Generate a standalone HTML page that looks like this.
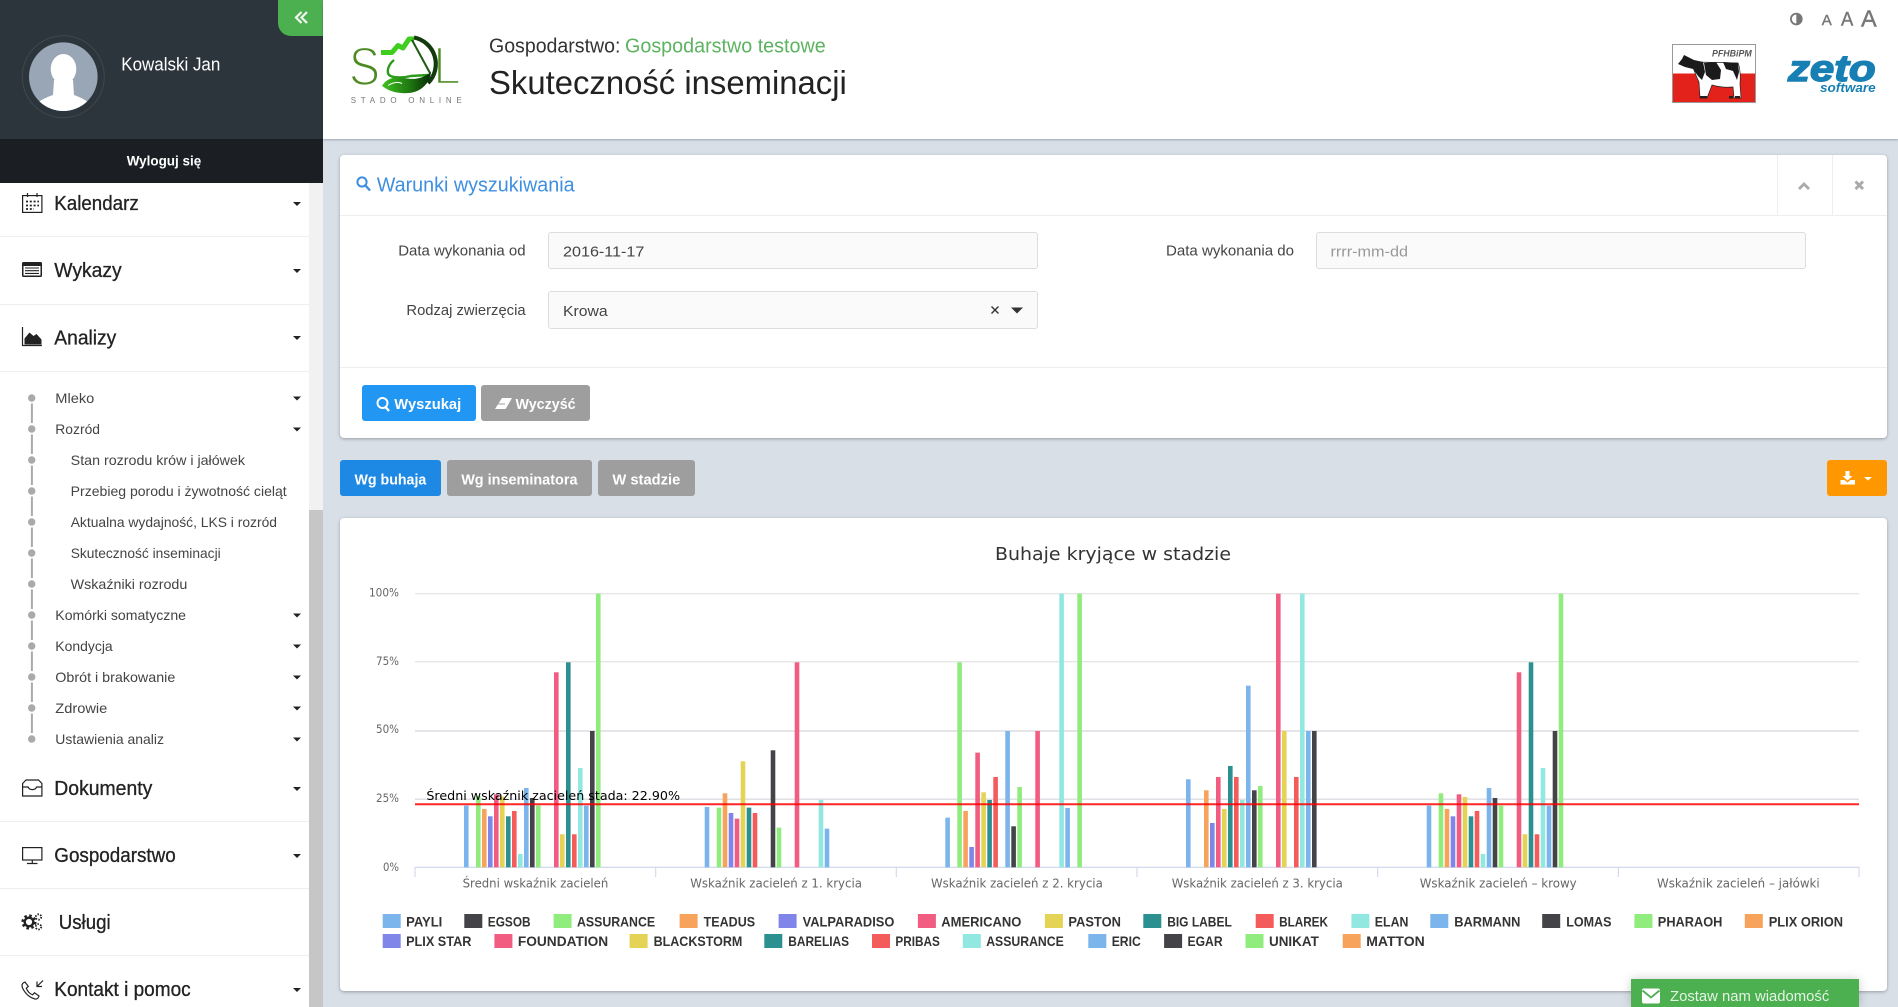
<!DOCTYPE html>
<html lang="pl"><head><meta charset="utf-8"><title>Skuteczność inseminacji</title>
<style>
html,body{margin:0;padding:0;background:#d8dfe7;width:1898px;height:1007px;overflow:hidden}
div{position:absolute;box-sizing:border-box}
svg.o{position:absolute;left:0;top:0;width:1898px;height:1007px}
text{font-family:"Liberation Sans",sans-serif;white-space:pre}
.m{font-size:20px;fill:#222;stroke:#222;stroke-width:.3}
.s{font-size:14px;fill:#444}
.l{font-size:15px;fill:#444}
.i{font-size:15px;fill:#444}
.b{font-size:15px;fill:#fff;font-weight:700}
.d{font-family:"DejaVu Sans",sans-serif;font-size:12px;fill:#666}
.lg{font-family:"Liberation Sans Narrow","Liberation Sans",sans-serif;font-weight:700;font-size:14px;fill:#333}
.c0{fill:#7cb5ec}.c1{fill:#434348}.c2{fill:#90ed7d}.c3{fill:#f7a35c}.c4{fill:#8085e9}.c5{fill:#f15c80}.c6{fill:#e4d354}.c7{fill:#2b908f}.c8{fill:#f45b5b}.c9{fill:#91e8e1}
.br rect{width:4.6px}
.sw rect{width:18px;height:14px}
.car{fill:#222}
</style></head><body>
<!-- sidebar -->
<div style="left:0;top:0;width:323px;height:1007px;background:#fff"></div>
<div style="left:0;top:0;width:323px;height:139px;background:#2d353c"></div>
<div style="left:0;top:139px;width:323px;height:44px;background:#1b1f23"></div>
<div style="left:278px;top:0;width:45px;height:36px;background:#4caf50;border-bottom-left-radius:13px"></div>
<div style="left:309px;top:183px;width:14px;height:327px;background:#f1f1f1"></div>
<div style="left:309px;top:510px;width:14px;height:497px;background:#c6c6c6"></div>
<div style="left:0;top:236px;width:309px;height:1px;background:#eee"></div>
<div style="left:0;top:304px;width:309px;height:1px;background:#eee"></div>
<div style="left:0;top:371px;width:309px;height:1px;background:#eee"></div>
<div style="left:0;top:821px;width:309px;height:1px;background:#eee"></div>
<div style="left:0;top:888px;width:309px;height:1px;background:#eee"></div>
<div style="left:0;top:955px;width:309px;height:1px;background:#eee"></div>
<!-- header -->
<div style="left:323px;top:0;width:1575px;height:139px;background:#fff;box-shadow:0 1px 2px rgba(0,0,0,.25)"></div>
<!-- search panel -->
<div style="left:340px;top:155px;width:1547px;height:283px;background:#fff;border-radius:4px;box-shadow:0 1px 3px rgba(0,0,0,.3)"></div>
<div style="left:340px;top:215px;width:1547px;height:1px;background:#eee"></div>
<div style="left:340px;top:367px;width:1547px;height:1px;background:#eee"></div>
<div style="left:1777px;top:155px;width:1px;height:60px;background:#eee"></div>
<div style="left:1832px;top:155px;width:1px;height:60px;background:#eee"></div>
<div style="left:548px;top:232px;width:490px;height:37px;background:#fafafa;border:1px solid #ddd;border-radius:3px"></div>
<div style="left:1316px;top:232px;width:490px;height:37px;background:#fafafa;border:1px solid #ddd;border-radius:3px"></div>
<div style="left:548px;top:291px;width:490px;height:38px;background:#fafafa;border:1px solid #ddd;border-radius:3px"></div>
<div style="left:362px;top:385px;width:114px;height:36px;background:#2196f3;border-radius:3px"></div>
<div style="left:481px;top:385px;width:109px;height:36px;background:#9e9e9e;border-radius:3px"></div>
<div style="left:340px;top:460px;width:101px;height:36px;background:#1e88e5;border-radius:3px"></div>
<div style="left:447px;top:460px;width:145px;height:36px;background:#9e9e9e;border-radius:3px"></div>
<div style="left:598px;top:460px;width:97px;height:36px;background:#9e9e9e;border-radius:3px"></div>
<div style="left:1827px;top:460px;width:60px;height:36px;background:#ff9800;border-radius:3px"></div>
<!-- chart panel -->
<div style="left:340px;top:518px;width:1547px;height:473px;background:#fff;border-radius:4px;box-shadow:0 1px 3px rgba(0,0,0,.3)"></div>
<div style="left:1631px;top:979px;width:228px;height:28px;background:#4caf50;box-shadow:0 0 10px rgba(0,0,0,.2)"></div>

<svg class="o" viewBox="0 0 1898 1007" xmlns="http://www.w3.org/2000/svg">
<defs>
<clipPath id="av"><circle cx="63.3" cy="76.7" r="34.3"/></clipPath>
<linearGradient id="lf" x1="0" x2="1" y1="0" y2="0"><stop offset="0" stop-color="#3fc21f"/><stop offset=".55" stop-color="#1f7a12"/><stop offset="1" stop-color="#082c05"/></linearGradient>
</defs>
<!-- sidebar head -->
<circle cx="63.3" cy="76.7" r="41" fill="none" stroke="#3f474f" stroke-width="1"/>
<circle cx="63.3" cy="76.7" r="34.3" fill="#98a6b5"/>
<g clip-path="url(#av)" fill="#fff">
<ellipse cx="63.500" cy="69" rx="12.800" ry="15"/>
<path d="M28 116 Q32 102 53 95 L54 80 L73 80 L74 95 Q94 102 98 116 Z"/>
</g>
<text x="121.3" y="70.7" font-size="18" fill="#fff" textLength="99" lengthAdjust="spacingAndGlyphs">Kowalski Jan</text>
<text x="126.7" y="165.7" font-size="14" font-weight="700" fill="#fff" textLength="74.5" lengthAdjust="spacingAndGlyphs">Wyloguj się</text>
<path d="M301.500 12 L296 17.500 L301.500 23 M307 12 L301.500 17.500 L307 23" fill="none" stroke="#fff" stroke-width="2.200" opacity=".92"/>

<!-- main menu -->
<text class="m" x="54.3" y="210" textLength="84.4" lengthAdjust="spacingAndGlyphs">Kalendarz</text>
<text class="m" x="54.3" y="277" textLength="67.4" lengthAdjust="spacingAndGlyphs">Wykazy</text>
<text class="m" x="54.3" y="344.5" textLength="62" lengthAdjust="spacingAndGlyphs">Analizy</text>
<text class="m" x="54.3" y="795" textLength="98" lengthAdjust="spacingAndGlyphs">Dokumenty</text>
<text class="m" x="54.3" y="862" textLength="121.4" lengthAdjust="spacingAndGlyphs">Gospodarstwo</text>
<text class="m" x="58.7" y="929" textLength="52" lengthAdjust="spacingAndGlyphs">Usługi</text>
<text class="m" x="54.3" y="996" textLength="136.4" lengthAdjust="spacingAndGlyphs">Kontakt i pomoc</text>
<!-- carets -->
<g class="car">
<path d="M293 202h8l-4 4z"/><path d="M293 269h8l-4 4z"/><path d="M293 336h8l-4 4z"/>
<path d="M293 396.500h8l-4 4z"/><path d="M293 427.500h8l-4 4z"/><path d="M293 613.500h8l-4 4z"/><path d="M293 644.500h8l-4 4z"/><path d="M293 675.500h8l-4 4z"/><path d="M293 706.500h8l-4 4z"/><path d="M293 737.500h8l-4 4z"/>
<path d="M293 787h8l-4 4z"/><path d="M293 854h8l-4 4z"/><path d="M293 988h8l-4 4z"/>
</g>
<!-- timeline -->
<path d="M31.900 403.500V735" stroke="#aaa" stroke-width="2" stroke-dasharray="19.500 11.500" fill="none"/>
<g fill="#aaa">
<circle cx="31.700" cy="398" r="3.700"/><circle cx="31.700" cy="429" r="3.700"/><circle cx="31.700" cy="460" r="3.700"/><circle cx="31.700" cy="491" r="3.700"/><circle cx="31.700" cy="522" r="3.700"/><circle cx="31.700" cy="553" r="3.700"/><circle cx="31.700" cy="584" r="3.700"/><circle cx="31.700" cy="615" r="3.700"/><circle cx="31.700" cy="646" r="3.700"/><circle cx="31.700" cy="677" r="3.700"/><circle cx="31.700" cy="708" r="3.700"/><circle cx="31.700" cy="739" r="3.700"/></g>
<text class="s" x="55.3" y="403" textLength="39" lengthAdjust="spacingAndGlyphs">Mleko</text>
<text class="s" x="55.3" y="434" textLength="44.700" lengthAdjust="spacingAndGlyphs">Rozród</text>
<text class="s" x="70.7" y="465" textLength="174.300" lengthAdjust="spacingAndGlyphs">Stan rozrodu krów i jałówek</text>
<text class="s" x="70.7" y="496" textLength="216" lengthAdjust="spacingAndGlyphs">Przebieg porodu i żywotność cieląt</text>
<text class="s" x="70.7" y="527" textLength="206.300" lengthAdjust="spacingAndGlyphs">Aktualna wydajność, LKS i rozród</text>
<text class="s" x="70.7" y="558" textLength="150" lengthAdjust="spacingAndGlyphs">Skuteczność inseminacji</text>
<text class="s" x="70.7" y="589" textLength="116.600" lengthAdjust="spacingAndGlyphs">Wskaźniki rozrodu</text>
<text class="s" x="55.3" y="620" textLength="130.700" lengthAdjust="spacingAndGlyphs">Komórki somatyczne</text>
<text class="s" x="55.3" y="651" textLength="57.400" lengthAdjust="spacingAndGlyphs">Kondycja</text>
<text class="s" x="55.3" y="682" textLength="120" lengthAdjust="spacingAndGlyphs">Obrót i brakowanie</text>
<text class="s" x="55.3" y="713" textLength="52" lengthAdjust="spacingAndGlyphs">Zdrowie</text>
<text class="s" x="55.3" y="744" textLength="108.700" lengthAdjust="spacingAndGlyphs">Ustawienia analiz</text>
<!-- menu icons -->
<g fill="none" stroke="#222" stroke-width="1.200">
<rect x="22.600" y="195.600" width="19.300" height="16.800"/><path d="M27.500 193v4M37 193v4"/>
<path d="M26 201.500h13M26 205.500h13M26 209h8" stroke-width="1.800" stroke-dasharray="2 1.800"/>
<path d="M22.600 783.500 L26 780h12.500l3.400 3.500v12.500H22.600zM22.600 787h5.500c1.500 3.500 7 3.500 8.500 0h5.300"/>
<rect x="22.600" y="847.600" width="19.300" height="12.400"/><path d="M32.300 860v3M27 863.500h10.500"/>
<path d="M24 982.500c-2 1-2.500 3-1.500 5.500 2.500 5 7 9.500 12.500 11 2 .3 3.500-1 4-3l-4.500-3.200-2 2c-2.500-1-5-3.600-6.200-6.500l2-2-3.300-4.200zM43 980.500l-6 6M37 981.500v5h5"/>
</g>
<rect x="22" y="262" width="20" height="15" rx="1.500" fill="#222"/><rect x="23.500" y="266" width="17" height="9.500" fill="#fff"/><path d="M25 268h14M25 270.700h14M25 273.400h14" stroke="#222" stroke-width="1.100"/>
<path d="M22.500 327v18.500H42" fill="none" stroke="#222" stroke-width="1.200"/><path d="M24.500 344.500v-6l5-6 4 3.500 3-2 5 5.500v5z" fill="#222"/>
<g fill="none" stroke="#222">
<circle cx="29" cy="922" r="6.300" stroke-width="2.600" stroke-dasharray="2.500 2.450"/><circle cx="29" cy="922" r="4.300" stroke-width="2.400"/>
<circle cx="38.500" cy="917" r="2.700" stroke-width="1.800" stroke-dasharray="1.500 1.330"/><circle cx="38.500" cy="926.800" r="2.700" stroke-width="1.800" stroke-dasharray="1.500 1.330"/>
</g>

<!-- SOL logo -->
<text x="349" y="85" font-size="54" fill="#4d8a22" stroke="#fff" stroke-width="1.800" paint-order="fill stroke" textLength="31" lengthAdjust="spacingAndGlyphs">S</text>
<text x="433" y="84" font-size="54" fill="#4d8a22" stroke="#fff" stroke-width="2.400" paint-order="fill stroke" textLength="28" lengthAdjust="spacingAndGlyphs">L</text>
<path d="M381 52.500h11l6-7 5 2.500 6-9 5 0" fill="none" stroke="#3fce1f" stroke-width="5" stroke-linejoin="round"/>
<path d="M414 37.500A27 27 0 0 1 428 83" fill="none" stroke="#133a0c" stroke-width="4.200"/>
<path d="M412 40l18 33" fill="none" stroke="#1e5a12" stroke-width="2"/>
<path d="M394 60c-5 4-8 11-5 15 3 3 14 3 22 1l17 -1" fill="none" stroke="#2c9a1a" stroke-width="2.400"/>
<path d="M382 86c4-7 12-10 22-8 10 2 18 1 27-6-1 11-10 20-22 21-12 1-20-2-27-7z" fill="url(#lf)"/>
<path d="M388 85.500c5-3 10-4 14-2" fill="none" stroke="#fff" stroke-width="1"/>
<text x="350.7" y="103" font-size="8" fill="#777" textLength="111" lengthAdjust="spacing">STADO ONLINE</text>
<!-- header titles -->
<text x="489" y="52.700" font-size="20" fill="#333" textLength="131.400" lengthAdjust="spacingAndGlyphs">Gospodarstwo:</text>
<text x="625" y="52.700" font-size="20" fill="#5cb360" textLength="200.700" lengthAdjust="spacingAndGlyphs">Gospodarstwo testowe</text>
<text x="489" y="94" font-size="33" fill="#222" textLength="357.800" lengthAdjust="spacingAndGlyphs">Skuteczność inseminacji</text>
<!-- right header -->
<circle cx="1796.300" cy="19" r="5.400" fill="#fff" stroke="#777" stroke-width="1.800"/><path d="M1796.300 13.600a5.400 5.400 0 0 1 0 10.800z" fill="#777"/>
<g fill="#777" stroke="#777" stroke-width=".4">
<text x="1821.700" y="25" font-size="15" textLength="10" lengthAdjust="spacingAndGlyphs">A</text>
<text x="1841" y="25.500" font-size="19" textLength="12.300" lengthAdjust="spacingAndGlyphs">A</text>
<text x="1861" y="26.700" font-size="23" textLength="15.700" lengthAdjust="spacingAndGlyphs">A</text>
</g>
<!-- PFHBiPM logo -->
<rect x="1672.500" y="44.500" width="83" height="58" fill="#fff" stroke="#999"/>
<rect x="1673" y="73.500" width="82" height="28.500" fill="#e3231b"/>
<text x="1712" y="56.500" font-size="9.500" font-weight="700" font-style="italic" fill="#555" textLength="39.700" lengthAdjust="spacingAndGlyphs">PFHBiPM</text>
<path d="M1694 62L1738 63Q1741 70 1740 84L1741 98H1734L1733 87Q1722 88 1712 85L1707 98H1700L1699 82Q1696 76 1694 70Z" fill="#fff" stroke="#222" stroke-width=".7"/>
<path d="M1678 64L1682 59 1684 55 1688 57 1694 60 1703 62 1705 72 1702 80 1698 76 1693 69 1685 67Z" fill="#1b1b1b"/>
<path d="M1704 63L1716 62 1721 70 1720 79 1712 80 1706 75Z" fill="#1b1b1b"/>
<path d="M1723 62L1738 63 1739 72 1737 80 1733 71 1726 69Z" fill="#1b1b1b"/>
<path d="M1700 96h7v2.500h-7zM1729 96h4v2.500h-4zM1735 96h5v2.500h-5z" fill="#222"/>
<!-- zeto -->
<text x="1788" y="81" font-size="37" font-weight="700" font-style="italic" fill="#177fb3" stroke="#177fb3" stroke-width="1.400" textLength="87.700" lengthAdjust="spacingAndGlyphs">zeto</text>
<text x="1820" y="92" font-size="13" font-weight="700" font-style="italic" fill="#177fb3" textLength="55.700" lengthAdjust="spacingAndGlyphs">software</text>

<!-- search panel content -->
<circle cx="362" cy="182" r="4.600" fill="none" stroke="#3f8fe0" stroke-width="2"/><path d="M365.500 185.500l4.500 5" stroke="#3f8fe0" stroke-width="2.400"/>
<text x="376.700" y="191.700" font-size="20" fill="#3f8fe0" textLength="197.900" lengthAdjust="spacingAndGlyphs">Warunki wyszukiwania</text>
<path d="M1799 189l5-5 5 5" fill="none" stroke="#aaa" stroke-width="2.800"/>
<path d="M1855.500 181.500l7.500 7.500M1863 181.500l-7.500 7.500" stroke="#aaa" stroke-width="3"/>
<text class="l" x="398.200" y="255.700" textLength="127.400" lengthAdjust="spacingAndGlyphs">Data wykonania od</text>
<text class="l" x="1166" y="255.700" textLength="128" lengthAdjust="spacingAndGlyphs">Data wykonania do</text>
<text class="l" x="406.400" y="315" textLength="119.200" lengthAdjust="spacingAndGlyphs">Rodzaj zwierzęcia</text>
<text class="i" x="563" y="256.700" textLength="81.400" lengthAdjust="spacingAndGlyphs">2016-11-17</text>
<text class="i" x="1330.500" y="256.700" style="fill:#999" textLength="77.500" lengthAdjust="spacingAndGlyphs">rrrr-mm-dd</text>
<text class="i" x="563" y="316" textLength="44.600" lengthAdjust="spacingAndGlyphs">Krowa</text>
<path d="M991.500 306.500l7 7M998.500 306.500l-7 7" stroke="#333" stroke-width="1.400"/>
<path d="M1011 307.500h12l-6 6z" fill="#333"/>
<!-- buttons -->
<circle cx="382.500" cy="403" r="5" fill="none" stroke="#fff" stroke-width="2"/><path d="M385.500 407l3.500 4" stroke="#fff" stroke-width="2.400"/>
<text class="b" x="394.300" y="409" textLength="66.900" lengthAdjust="spacingAndGlyphs">Wyszukaj</text>
<path d="M502 398h10l-5.500 9.500-1 1.500h-10.500z" fill="#fff"/><path d="M497 404h8" stroke="#9e9e9e" stroke-width="1"/>
<text class="b" x="515.500" y="409" textLength="60.100" lengthAdjust="spacingAndGlyphs">Wyczyść</text>
<text class="b" x="354.500" y="484.300" textLength="71.800" lengthAdjust="spacingAndGlyphs">Wg buhaja</text>
<text class="b" x="461.200" y="484.300" textLength="116.300" lengthAdjust="spacingAndGlyphs">Wg inseminatora</text>
<text class="b" x="612.400" y="484.300" textLength="67.900" lengthAdjust="spacingAndGlyphs">W stadzie</text>
<path d="M1845.500 471h4v5h3l-5 4.500-5-4.500h3z" fill="#fff"/><path d="M1840.500 480h4l3 2.500 3-2.500h4.500v4.500h-14.500z" fill="#fff"/>
<path d="M1864 477h8l-4 3.500z" fill="#fff"/>

<!-- chart -->
<text x="995" y="560" style="font-family:'DejaVu Sans',sans-serif;font-size:18px;fill:#333" textLength="236" lengthAdjust="spacingAndGlyphs">Buhaje kryjące w stadzie</text>
<g stroke="#e6e6e6" stroke-width="1.400">
<path d="M415 593.700H1859M415 661.700H1859"/><path d="M415 731H1859M415 799.200H1859" stroke="#dcdce2"/>
</g>
<path d="M415 867.300H1859" stroke="#ccd6eb" stroke-width="1.200"/>
<path d="M415 867v10M655.700 867v10M896.300 867v10M1137 867v10M1377.700 867v10M1618.300 867v10M1859 867v10" stroke="#ccd6eb" stroke-width="1"/>
<g class="d">
<text class="d" x="369" y="596.700" textLength="30" lengthAdjust="spacingAndGlyphs" style="font-size:11.500px">100%</text>
<text class="d" x="376" y="665" textLength="23" lengthAdjust="spacingAndGlyphs" style="font-size:11.500px">75%</text>
<text class="d" x="376" y="733" textLength="23" lengthAdjust="spacingAndGlyphs" style="font-size:11.500px">50%</text>
<text class="d" x="376" y="802" textLength="23" lengthAdjust="spacingAndGlyphs" style="font-size:11.500px">25%</text>
<text class="d" x="383" y="871" textLength="16" lengthAdjust="spacingAndGlyphs" style="font-size:11.500px">0%</text>
</g>
<g class="br" transform="translate(464 867.300) scale(1 -.33333)">
<rect class="c0" x="0" height="185"/><rect class="c2" x="12" height="214"/><rect class="c3" x="18" height="175"/><rect class="c4" x="24" height="153"/><rect class="c5" x="30" height="219"/><rect class="c6" x="36" height="212"/><rect class="c7" x="42" height="153"/><rect class="c8" x="48" height="169"/><rect class="c9" x="54" height="40"/><rect class="c0" x="60" height="238"/><rect class="c1" x="66" height="208"/><rect class="c2" x="72" height="185"/><rect class="c5" x="90" height="585"/><rect class="c6" x="96" height="99"/><rect class="c7" x="102" height="615"/><rect class="c8" x="108" height="99"/><rect class="c9" x="114" height="298"/><rect class="c0" x="120" height="185"/><rect class="c1" x="126" height="409"/><rect class="c2" x="132" height="821"/>
</g>
<g class="br" transform="translate(704.700 867.300) scale(1 -.33333)">
<rect class="c0" x="0" height="181"/><rect class="c2" x="12" height="179"/><rect class="c3" x="18" height="222"/><rect class="c4" x="24" height="163"/><rect class="c5" x="30" height="146"/><rect class="c6" x="36" height="318"/><rect class="c7" x="42" height="179"/><rect class="c8" x="48" height="163"/><rect class="c1" x="66" height="351"/><rect class="c2" x="72" height="119"/><rect class="c5" x="90" height="615"/><rect class="c9" x="114" height="202"/><rect class="c0" x="120" height="116"/>
</g>
<g class="br" transform="translate(945.300 867.300) scale(1 -.33333)">
<rect class="c0" x="0" height="149"/><rect class="c2" x="12" height="615"/><rect class="c3" x="18" height="169"/><rect class="c4" x="24" height="61"/><rect class="c5" x="30" height="344"/><rect class="c6" x="36" height="225"/><rect class="c7" x="42" height="202"/><rect class="c8" x="48" height="271"/><rect class="c0" x="60" height="409"/><rect class="c1" x="66" height="123"/><rect class="c2" x="72" height="241"/><rect class="c5" x="90" height="409"/><rect class="c9" x="114" height="821"/><rect class="c0" x="120" height="178"/><rect class="c2" x="132" height="821"/>
</g>
<g class="br" transform="translate(1186 867.300) scale(1 -.33333)">
<rect class="c0" x="0" height="264"/><rect class="c3" x="18" height="231"/><rect class="c4" x="24" height="133"/><rect class="c5" x="30" height="271"/><rect class="c6" x="36" height="175"/><rect class="c7" x="42" height="304"/><rect class="c8" x="48" height="271"/><rect class="c9" x="54" height="202"/><rect class="c0" x="60" height="545"/><rect class="c1" x="66" height="231"/><rect class="c2" x="72" height="244"/><rect class="c5" x="90" height="821"/><rect class="c6" x="96" height="409"/><rect class="c8" x="108" height="271"/><rect class="c9" x="114" height="821"/><rect class="c0" x="120" height="409"/><rect class="c1" x="126" height="409"/>
</g>
<g class="br" transform="translate(1426.700 867.300) scale(1 -.33333)">
<rect class="c0" x="0" height="185"/><rect class="c2" x="12" height="222"/><rect class="c3" x="18" height="175"/><rect class="c4" x="24" height="153"/><rect class="c5" x="30" height="219"/><rect class="c6" x="36" height="211"/><rect class="c7" x="42" height="153"/><rect class="c8" x="48" height="169"/><rect class="c9" x="54" height="40"/><rect class="c0" x="60" height="238"/><rect class="c1" x="66" height="208"/><rect class="c2" x="72" height="185"/><rect class="c5" x="90" height="585"/><rect class="c6" x="96" height="99"/><rect class="c7" x="102" height="615"/><rect class="c8" x="108" height="99"/><rect class="c9" x="114" height="298"/><rect class="c0" x="120" height="185"/><rect class="c1" x="126" height="409"/><rect class="c2" x="132" height="821"/>
</g>
<path d="M415 804.300H1859" stroke="#f00" stroke-width="2" opacity=".85"/>
<text x="426.400" y="800" style="font-family:'DejaVu Sans',sans-serif;font-size:12px;fill:#000" textLength="253.600" lengthAdjust="spacingAndGlyphs">Średni wskaźnik zacieleń stada: 22.90%</text>
<text class="d" x="462.600" y="887.300" textLength="145.700" lengthAdjust="spacingAndGlyphs">Średni wskaźnik zacieleń</text>
<text class="d" x="690.200" y="887.300" textLength="171.800" lengthAdjust="spacingAndGlyphs">Wskaźnik zacieleń z 1. krycia</text>
<text class="d" x="931" y="887.300" textLength="171.800" lengthAdjust="spacingAndGlyphs">Wskaźnik zacieleń z 2. krycia</text>
<text class="d" x="1171.700" y="887.300" textLength="171.100" lengthAdjust="spacingAndGlyphs">Wskaźnik zacieleń z 3. krycia</text>
<text class="d" x="1419.700" y="887.300" textLength="157" lengthAdjust="spacingAndGlyphs">Wskaźnik zacieleń – krowy</text>
<text class="d" x="1657" y="887.300" textLength="162.700" lengthAdjust="spacingAndGlyphs">Wskaźnik zacieleń – jałówki</text>
<!-- legend swatches -->
<g class="sw">
<rect class="c0" x="382.700" y="914"/><rect class="c1" x="464.300" y="914"/><rect class="c2" x="553.600" y="914"/><rect class="c3" x="679.600" y="914"/><rect class="c4" x="778.600" y="914"/><rect class="c5" x="917.900" y="914"/><rect class="c6" x="1044.900" y="914"/><rect class="c7" x="1143.300" y="914"/><rect class="c8" x="1255.700" y="914"/><rect class="c9" x="1351.400" y="914"/><rect class="c0" x="1430.300" y="914"/><rect class="c1" x="1542.200" y="914"/><rect class="c2" x="1634.400" y="914"/><rect class="c3" x="1744.800" y="914"/>
<rect class="c4" x="382.700" y="934"/><rect class="c5" x="494.400" y="934"/><rect class="c6" x="629.600" y="934"/><rect class="c7" x="764.300" y="934"/><rect class="c8" x="872" y="934"/><rect class="c9" x="962.800" y="934"/><rect class="c0" x="1088.300" y="934"/><rect class="c1" x="1164.100" y="934"/><rect class="c2" x="1245.500" y="934"/><rect class="c3" x="1342.700" y="934"/>
</g>
<g>
<text class="lg" x="406.100" y="926.700" textLength="36.200" lengthAdjust="spacingAndGlyphs">PAYLI</text>
<text class="lg" x="487.800" y="926.700" textLength="42.800" lengthAdjust="spacingAndGlyphs">EGSOB</text>
<text class="lg" x="577" y="926.700" textLength="78.100" lengthAdjust="spacingAndGlyphs">ASSURANCE</text>
<text class="lg" x="703.600" y="926.700" textLength="51.500" lengthAdjust="spacingAndGlyphs">TEADUS</text>
<text class="lg" x="802.600" y="926.700" textLength="91.800" lengthAdjust="spacingAndGlyphs">VALPARADISO</text>
<text class="lg" x="941.300" y="926.700" textLength="80.100" lengthAdjust="spacingAndGlyphs">AMERICANO</text>
<text class="lg" x="1068.400" y="926.700" textLength="52.500" lengthAdjust="spacingAndGlyphs">PASTON</text>
<text class="lg" x="1167.200" y="926.700" textLength="64.600" lengthAdjust="spacingAndGlyphs">BIG LABEL</text>
<text class="lg" x="1279.100" y="926.700" textLength="48.900" lengthAdjust="spacingAndGlyphs">BLAREK</text>
<text class="lg" x="1374.800" y="926.700" textLength="33.600" lengthAdjust="spacingAndGlyphs">ELAN</text>
<text class="lg" x="1454.200" y="926.700" textLength="66.200" lengthAdjust="spacingAndGlyphs">BARMANN</text>
<text class="lg" x="1566.200" y="926.700" textLength="45.300" lengthAdjust="spacingAndGlyphs">LOMAS</text>
<text class="lg" x="1657.800" y="926.700" textLength="64.600" lengthAdjust="spacingAndGlyphs">PHARAOH</text>
<text class="lg" x="1768.700" y="926.700" textLength="74.300" lengthAdjust="spacingAndGlyphs">PLIX ORION</text>
<text class="lg" x="406.100" y="946" textLength="65.300" lengthAdjust="spacingAndGlyphs">PLIX STAR</text>
<text class="lg" x="517.900" y="946" textLength="90.300" lengthAdjust="spacingAndGlyphs">FOUNDATION</text>
<text class="lg" x="653.600" y="946" textLength="88.700" lengthAdjust="spacingAndGlyphs">BLACKSTORM</text>
<text class="lg" x="788.300" y="946" textLength="60.700" lengthAdjust="spacingAndGlyphs">BARELIAS</text>
<text class="lg" x="895.400" y="946" textLength="44.400" lengthAdjust="spacingAndGlyphs">PRIBAS</text>
<text class="lg" x="986.200" y="946" textLength="77.600" lengthAdjust="spacingAndGlyphs">ASSURANCE</text>
<text class="lg" x="1111.700" y="946" textLength="29.100" lengthAdjust="spacingAndGlyphs">ERIC</text>
<text class="lg" x="1187.500" y="946" textLength="35.100" lengthAdjust="spacingAndGlyphs">EGAR</text>
<text class="lg" x="1269" y="946" textLength="49.800" lengthAdjust="spacingAndGlyphs">UNIKAT</text>
<text class="lg" x="1366.200" y="946" textLength="58.500" lengthAdjust="spacingAndGlyphs">MATTON</text>
</g>
<!-- message widget -->
<rect x="1642" y="988.500" width="18" height="15" rx="2" fill="#fff"/><path d="M1642.500 990.500l8.500 7 8.500-7" fill="none" stroke="#4caf50" stroke-width="1.800"/>
<text x="1670" y="1001" font-size="15" fill="#e4f4e4" textLength="159.300" lengthAdjust="spacingAndGlyphs">Zostaw nam wiadomość</text>
</svg>
</body></html>
